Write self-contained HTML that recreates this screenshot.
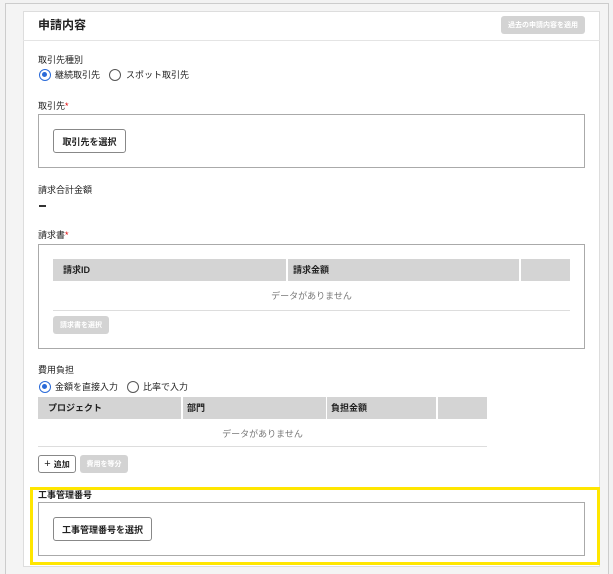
<!DOCTYPE html>
<html><head><meta charset="utf-8"><style>
*{box-sizing:border-box;margin:0;padding:0}
body{width:613px;height:574px;background:#fff;font-family:"Liberation Sans","Noto Sans CJK JP",sans-serif;color:#222;position:relative;overflow:hidden}
.a{position:absolute}
.t{font-size:9px;line-height:12px}
.btn{position:absolute;border:1px solid #888;border-radius:3px;background:#fff;font-size:9px;font-weight:bold;display:flex;align-items:center;justify-content:center}
.dis{position:absolute;background:#d3d3d3;border-radius:3px;color:#fff;font-size:7px;font-weight:bold;display:flex;align-items:center;justify-content:center}
.radio{position:absolute;width:12px;height:12px;border-radius:50%;border:1px solid #555}
.radio.on{border:1.5px solid #2a6ad8}
.radio.on::after{content:"";position:absolute;left:2px;top:2px;width:5px;height:5px;border-radius:50%;background:#2a6ad8}
.th{position:absolute;background:#d4d4d4;font-size:9px;font-weight:bold;line-height:22px;height:22px}
.req{color:#d00}
</style></head><body>
<div class="a" style="left:0;top:0;width:613px;height:574px;background:#f2f2f2"></div>
<div class="a" style="left:5px;top:3px;width:604px;height:571px;border:1px solid #ccc;border-bottom:none;background:#f4f4f4"></div>
<div class="a" style="left:23px;top:11px;width:577px;height:556px;background:#fff;border:1px solid #ddd"></div>
<div class="a" style="left:23px;top:40px;width:577px;height:1px;background:#e4e4e4"></div>
<div class="a" style="left:38px;top:17px;font-size:12px;font-weight:bold;line-height:17px">申請内容</div>
<div class="dis" style="left:501px;top:16px;width:84px;height:18px">過去の申請内容を適用</div>

<div class="a t" style="left:38px;top:54px">取引先種別</div>
<div class="radio on" style="left:39px;top:69px"></div>
<div class="a t" style="left:55px;top:69px">継続取引先</div>
<div class="radio" style="left:109px;top:69px"></div>
<div class="a t" style="left:126px;top:69px">スポット取引先</div>

<div class="a t" style="left:38px;top:100px">取引先<span class="req">*</span></div>
<div class="a" style="left:38px;top:114px;width:547px;height:54px;border:1px solid #aaa"></div>
<div class="btn" style="left:53px;top:129px;width:73px;height:24px">取引先を選択</div>

<div class="a t" style="left:38px;top:184px">請求合計金額</div>
<div class="a" style="left:39px;top:205px;width:7px;height:1.5px;background:#333"></div>

<div class="a t" style="left:38px;top:229px">請求書<span class="req">*</span></div>
<div class="a" style="left:38px;top:244px;width:547px;height:105px;border:1px solid #aaa"></div>
<div class="th" style="left:53px;top:259px;width:233px;padding-left:10px">請求ID</div>
<div class="th" style="left:288px;top:259px;width:231px;padding-left:5px">請求金額</div>
<div class="th" style="left:521px;top:259px;width:49px"></div>
<div class="a t" style="left:53px;top:290px;width:517px;text-align:center;color:#777">データがありません</div>
<div class="a" style="left:53px;top:310px;width:517px;height:1px;background:#ddd"></div>
<div class="dis" style="left:53px;top:316px;width:56px;height:18px">請求書を選択</div>

<div class="a t" style="left:38px;top:364px">費用負担</div>
<div class="radio on" style="left:39px;top:381px"></div>
<div class="a t" style="left:55px;top:381px">金額を直接入力</div>
<div class="radio" style="left:127px;top:381px"></div>
<div class="a t" style="left:143px;top:381px">比率で入力</div>
<div class="th" style="left:38px;top:397px;width:143px;padding-left:10px">プロジェクト</div>
<div class="th" style="left:183px;top:397px;width:143px;padding-left:4px">部門</div>
<div class="th" style="left:327px;top:397px;width:109px;padding-left:4px">負担金額</div>
<div class="th" style="left:438px;top:397px;width:49px"></div>
<div class="a t" style="left:38px;top:428px;width:449px;text-align:center;color:#777">データがありません</div>
<div class="a" style="left:38px;top:446px;width:449px;height:1px;background:#ddd"></div>
<div class="btn" style="left:38px;top:455px;width:38px;height:18px;font-size:8px"><span style="font-size:11px;font-weight:normal;margin-right:3px">+</span>追加</div>
<div class="dis" style="left:80px;top:455px;width:48px;height:18px">費用を等分</div>

<div class="a" style="left:30px;top:487px;width:570px;height:78px;border:3px solid #ffe600"></div>
<div class="a t" style="left:38px;top:489px;font-weight:bold">工事管理番号</div>
<div class="a" style="left:38px;top:502px;width:547px;height:54px;border:1px solid #aaa"></div>
<div class="btn" style="left:53px;top:517px;width:99px;height:24px">工事管理番号を選択</div>
</body></html>
